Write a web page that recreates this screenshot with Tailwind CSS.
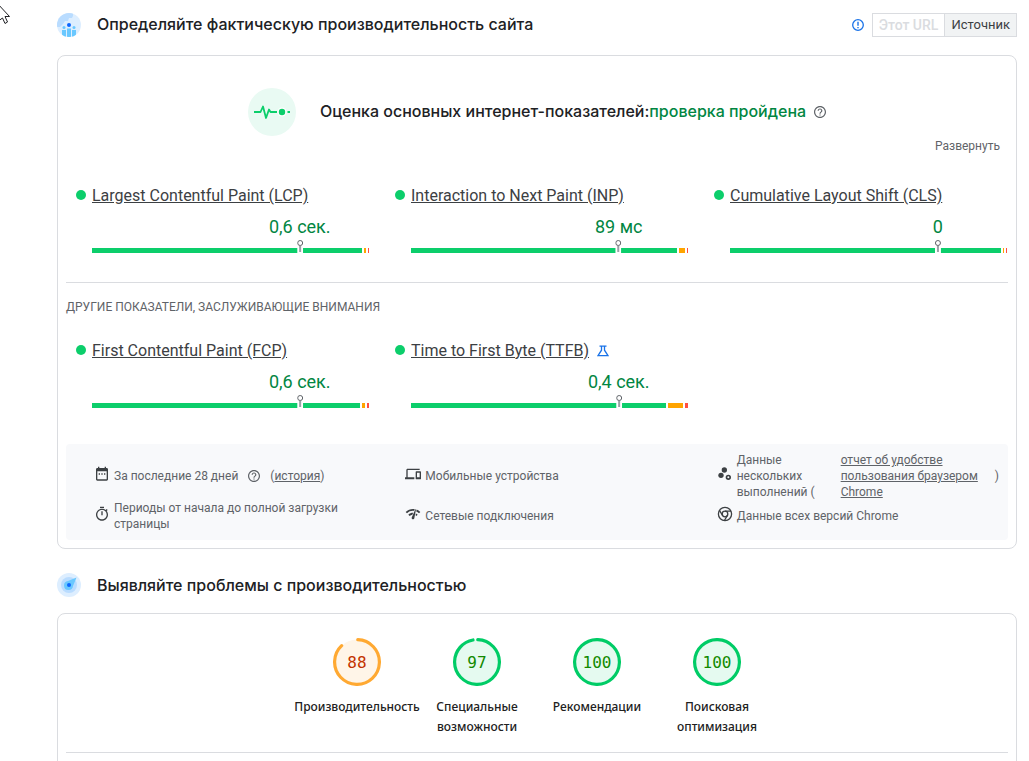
<!DOCTYPE html>
<html lang="ru">
<head>
    <meta charset="UTF-8">
    <meta name="viewport" content="width=device-width, initial-scale=1.0">
    <title>PageSpeed Insights</title>
    <script src="https://cdn.jsdelivr.net/npm/@tailwindcss/browser@4"></script>
</head>
<body class="bg-white font-['Roboto',sans-serif] text-[#3c4043] overflow-hidden">
    <svg class="absolute left-0 top-1.5" width="11" height="19" viewBox="0 0 11 19" fill="#fff" stroke="#1f2024" stroke-width="1"><path d="M-3-3 9.500 10.500H5L7.500 16 5 17.500 2.500 12-3 16z"/></svg>

    <main class="pl-[57px] pr-3">
        <!-- Field data -->
        <header class="flex items-center pt-3 h-[37px]">
            <svg class="mr-4" width="24" height="24" viewBox="0 0 24 24">
                <defs><clipPath id="disc"><circle cx="12" cy="12" r="12"/></clipPath></defs>
                <g clip-path="url(#disc)">
                    <path fill="#ddeeff" d="M0 0h24v24H0z"/>
                    <path fill="#b9dcff" d="M0 0h16v3l-1 2h-3l-1 3H8L6 11 3 14H0z"/>
                    <path fill="#69c8ff" d="M5 17h4v7H5zM15 17h4v7h-4zM10 15.500h4V24h-4z"/>
                    <circle cx="7" cy="14.500" r="1.500" fill="#69c8ff"/>
                    <circle cx="17" cy="14.500" r="1.500" fill="#69c8ff"/>
                    <circle cx="12" cy="12" r="2.800" fill="#ddeeff"/>
                    <circle cx="12" cy="12" r="2" fill="#0b66ff"/>
                </g>
            </svg>
            <h2 class="pb-0.5 font-['Inter',sans-serif] text-base font-medium text-[#202124]">Определяйте фактическую производительность сайта</h2>
            <svg class="ml-auto mr-2" width="12" height="12" viewBox="0 0 12 12" fill="none" stroke="#1a73e8"><circle cx="6" cy="6" r="5.300" stroke-width="1.300"/><path stroke-width="1.400" d="M6 2.800v4M6 7.900v1.300"/></svg>
            <div class="flex text-sm leading-[22px]">
                <button type="button" disabled class="border border-r-0 border-[#dadce0] px-1.5 font-medium text-[#dadce0]">Этот URL</button>
                <button type="button" class="border border-[#dadce0] bg-[#f1f3f4] px-1.5 text-[13px] text-[#3c4043]">Источник</button>
            </div>
        </header>

        <section class="mt-[18px] rounded-lg border border-[#dadce0] px-2 pb-2">
            <div class="flex items-center justify-center pt-8">
                <svg class="mr-6" width="48" height="48" viewBox="0 0 48 48">
                    <circle cx="24" cy="24" r="24" fill="#e9faf3"/>
                    <path fill="none" stroke="#0cce6b" stroke-width="1.800" stroke-linejoin="round" d="M6 24h6.500l2.500-5.500 3 11.500 3-8.500 1.500 2.500H29M39.500 24H42"/>
                    <circle cx="34" cy="24" r="4.500" fill="#fff"/>
                    <circle cx="34" cy="24" r="3.200" fill="#0cce6b"/>
                </svg>
                <h3 class="pb-0.5 font-['Inter',sans-serif] text-base font-medium text-[#202124]">Оценка основных интернет-показателей:<span class="text-[#018642]">проверка пройдена</span></h3>
                <svg class="ml-2" width="12" height="12" viewBox="2 2 20 20" fill="#5f6368"><path d="M11 18h2v-2h-2v2zm1-16C6.480 2 2 6.480 2 12s4.480 10 10 10 10-4.480 10-10S17.520 2 12 2zm0 18c-4.410 0-8-3.590-8-8s3.590-8 8-8 8 3.590 8 8-3.590 8-8 8zm0-14c-2.210 0-4 1.790-4 4h2c0-1.100.9-2 2-2s2 .9 2 2c0 2-3 1.750-3 5h2c0-2.250 3-2.500 3-5 0-2.210-1.790-4-4-4z"/></svg>
            </div>
            <div class="flex justify-end pr-2">
                <button type="button" class="text-xs leading-5 text-[#5f6368]">Развернуть</button>
            </div>

            <div id="vitals" class="grid grid-cols-3 gap-x-[26px] pt-7 pr-px pl-2.5"></div>

            <div class="mt-[29px] border-t border-[#dadce0] pt-3.5">
                <h4 class="text-xs leading-5 text-[#5f6368]">ДРУГИЕ ПОКАЗАТЕЛИ, ЗАСЛУЖИВАЮЩИЕ ВНИМАНИЯ</h4>
            </div>

            <div id="otherMetrics" class="grid grid-cols-3 gap-x-[26px] pt-[22px] pr-px pl-2.5"></div>

            <ul class="mt-9 grid grid-cols-3 gap-x-5 rounded bg-[#f8f9fb] py-2 pl-7 text-xs leading-4 text-[#5f6368]">
                <li class="flex items-center gap-1">
                    <svg class="mb-1 shrink-0" width="16" height="16" viewBox="0 0 24 24" fill="#3c4043"><path d="M19 3h-1V1h-2v2H8V1H6v2H5c-1.110 0-1.990.9-1.990 2L3 20c0 1.100.89 2 2 2h14c1.100 0 2-.9 2-2V5c0-1.100-.9-2-2-2zm0 17H5V8h14v12zM7 11h2v2H7zM11 11h2v2h-2zM15 11h2v2h-2z"/></svg>
                    <span>За последние 28 дней</span>
                    <svg class="mx-1.5 shrink-0" width="12" height="12" viewBox="2 2 20 20" fill="#5f6368"><path d="M11 18h2v-2h-2v2zm1-16C6.480 2 2 6.480 2 12s4.480 10 10 10 10-4.480 10-10S17.520 2 12 2zm0 18c-4.410 0-8-3.590-8-8s3.590-8 8-8 8 3.590 8 8-3.590 8-8 8zm0-14c-2.210 0-4 1.790-4 4h2c0-1.100.9-2 2-2s2 .9 2 2c0 2-3 1.750-3 5h2c0-2.250 3-2.500 3-5 0-2.210-1.790-4-4-4z"/></svg>
                    <span>(<a href="#" class="underline">история</a>)</span>
                </li>
                <li class="flex items-center gap-1">
                    <svg class="mb-1 shrink-0" width="16" height="16" viewBox="0 0 24 24" fill="#3c4043"><path d="M4 6h18V4H4c-1.100 0-2 .9-2 2v11H0v3h14v-3H4V6zm19 2h-6c-.55 0-1 .45-1 1v10c0 .55.45 1 1 1h6c.55 0 1-.45 1-1V9c0-.55-.45-1-1-1zm-1 9h-4v-7h4v7z"/></svg>
                    <span>Мобильные устройства</span>
                </li>
                <li class="flex items-center gap-1">
                    <svg class="mb-1 shrink-0" width="16" height="16" viewBox="0 0 24 24" fill="#3c4043"><circle cx="6" cy="14" r="4"/><circle cx="11" cy="6" r="4"/><path fill-rule="evenodd" d="M17 13a4 4 0 1 0 0 8 4 4 0 0 0 0-8zm0 2.500a1.500 1.500 0 1 1 0 3 1.500 1.500 0 0 1 0-3z"/></svg>
                    <span class="w-[92px] shrink-0">Данные нескольких выполнений (</span>
                    <a href="#" class="ml-2 w-[150px] underline">отчет об удобстве пользования браузером Chrome</a>
                    <span>)</span>
                </li>
                <li class="flex items-center gap-1">
                    <svg class="mb-1 shrink-0" width="16" height="16" viewBox="0 0 24 24" fill="#3c4043"><path d="M15 1H9v2h6V1zm-4 13h2V8h-2v6zm8.030-6.610 1.420-1.420c-.43-.51-.9-.99-1.410-1.410l-1.420 1.420C16.070 4.740 14.120 4 12 4c-4.970 0-9 4.030-9 9s4.020 9 9 9 9-4.030 9-9c0-2.120-.74-4.070-1.970-5.610zM12 20c-3.870 0-7-3.130-7-7s3.130-7 7-7 7 3.130 7 7-3.130 7-7 7z"/></svg>
                    <span>Периоды от начала до полной загрузки страницы</span>
                </li>
                <li class="flex items-center gap-1">
                    <svg class="mb-1 shrink-0" width="16" height="16" viewBox="0 0 24 24" fill="#3c4043"><path d="M15.900 5c-.17 0-.32.090-.41.230l-.07.150-5.180 11.650c-.16.290-.26.610-.26.960 0 1.110.9 2.010 2.010 2.010.96 0 1.770-.68 1.960-1.590l.01-.03L16.400 5.500c0-.28-.22-.5-.5-.5zM1 9l2 2c2.880-2.880 6.790-4.080 10.530-3.620l1.190-2.680C9.890 3.840 4.740 5.270 1 9zm20 2 2-2c-1.640-1.640-3.550-2.820-5.590-3.570l-.53 2.820c1.500.62 2.900 1.530 4.120 2.750zm-4 4 2-2c-.8-.8-1.700-1.420-2.660-1.890l-.55 2.920c.42.270.83.590 1.210.97zM5 13l2 2c1.130-1.130 2.560-1.790 4.030-2l1.280-2.880c-2.630-.08-5.300.87-7.310 2.880z"/></svg>
                    <span>Сетевые подключения</span>
                </li>
                <li class="flex items-center gap-1">
                    <svg class="mb-1 shrink-0" width="16" height="16" viewBox="0 0 16 16" fill="none" stroke="#3c4043" stroke-width="1.300"><circle cx="8" cy="8" r="6.600"/><circle cx="8" cy="8" r="2.800"/><path d="M8 5.200h6M5.600 9.400l-3.200-5M10.400 9.400l-3 5.100"/></svg>
                    <span>Данные всех версий Chrome</span>
                </li>
            </ul>
        </section>

        <!-- Lab data -->
        <header class="mt-6 flex items-center">
            <svg class="mr-4" width="24" height="24" viewBox="0 0 24 24">
                <circle cx="12" cy="12" r="12" fill="#ddeeff"/>
                <circle cx="12" cy="12" r="8" fill="#b9dcff"/>
                <path fill="#69c8ff" d="M19.500 4.500 16 13a4.500 4.500 0 1 1-5-5z"/>
                <circle cx="12" cy="12" r="2" fill="#0b66ff"/>
            </svg>
            <h2 class="font-['Inter',sans-serif] text-base leading-[22px] font-medium text-[#202124]">Выявляйте проблемы с производительностью</h2>
        </header>

        <section class="mt-4 rounded-lg border border-[#dadce0] px-2 pb-10">
            <div id="gauges" class="flex justify-center pt-6"></div>
            <hr class="mt-[15px] border-[#dadce0]">
        </section>
    </main>

    <script>
        const vitals = [
            { name: 'Largest Contentful Paint (LCP)', value: '0,6 сек.', split: [270, 2, 1] },
            { name: 'Interaction to Next Paint (INP)', value: '89 мс', split: [266, 6, 1] },
            { name: 'Cumulative Layout Shift (CLS)', value: '0', split: [271, 1, 1] },
        ];
        const otherMetrics = [
            { name: 'First Contentful Paint (FCP)', value: '0,6 сек.', split: [268, 3, 2] },
            { name: 'Time to First Byte (TTFB)', value: '0,4 сек.', split: [255, 15, 3], experimental: true },
        ];
        const gauges = [
            { label: 'Производительность', score: 88, ring: '#ffa932', fill: '#fff5e8', text: 'text-[#c33300]' },
            { label: 'Специальные возможности', score: 97, ring: '#00cc66', fill: '#e5faf0', text: 'text-[#128a00]' },
            { label: 'Рекомендации', score: 100, ring: '#00cc66', fill: '#e5faf0', text: 'text-[#128a00]' },
            { label: 'Поисковая оптимизация', score: 100, ring: '#00cc66', fill: '#e5faf0', text: 'text-[#128a00]' },
        ];

        const flask = `<svg class="ml-2" width="12" height="12" viewBox="0 0 12 12" fill="none" stroke="#1a73e8" stroke-width="1.300"><path d="M2.500 1.200h7M4.500 1.200v4L1 10.700h10L7.500 5.200v-4"/></svg>`;

        function metric(m) {
            return `
                <div>
                    <div class="flex items-center">
                        <span class="mr-1.5 mb-0.5 size-2.5 rounded-full bg-[#0cce6b]"></span>
                        <a href="#" class="text-base leading-6 underline">${m.name}</a>
                        ${m.experimental ? flask : ''}
                    </div>
                    <div class="relative ml-4 pt-10">
                        <div class="flex h-[5px] gap-0.5">
                            <span class="bg-[#0cce6b]" style="flex: ${m.split[0]} 0 0"></span>
                            <span class="bg-[#ffa400]" style="flex: ${m.split[1]} 0 0"></span>
                            <span class="bg-[#ff4e42]" style="flex: ${m.split[2]} 0 0"></span>
                        </div>
                        <div class="absolute bottom-0 left-3/4 flex -translate-x-1/2 flex-col items-center">
                            <span class="text-lg leading-6 whitespace-nowrap text-[#018642]">${m.value}</span>
                            <svg class="mt-px" width="6" height="13" viewBox="0 0 6 13"><path fill="#fff" d="M0 8h6v5H0z"/><path stroke="#9aa0a6" stroke-width="2" d="M3 6v6"/><circle cx="3" cy="3" r="2.500" fill="#fff" stroke="#5f6368"/></svg>
                        </div>
                    </div>
                </div>`;
        }

        function gauge(g) {
            const length = 2 * Math.PI * 56;
            const arc = g.score === 100 ? length : length * g.score / 100 - 4;
            return `
                <a href="#" class="flex w-[120px] flex-col items-center">
                    <span class="relative size-12">
                        <svg width="48" height="48" viewBox="0 0 120 120">
                            <circle cx="60" cy="60" r="56" fill="${g.fill}"/>
                            <circle cx="60" cy="60" r="56" fill="none" stroke="${g.ring}" stroke-width="8" stroke-linecap="round" stroke-dasharray="${arc} ${length}" transform="rotate(-88 60 60)"/>
                        </svg>
                        <span class="absolute inset-0 flex items-center justify-center pt-0.5 font-['DejaVu_Sans_Mono',monospace] text-base ${g.text}">${g.score}</span>
                    </span>
                    <span class="mt-[11px] text-center font-['Noto_Sans',sans-serif] text-xs leading-5 font-medium text-[#212121]">${g.label}</span>
                </a>`;
        }

        document.getElementById('vitals').innerHTML = vitals.map(metric).join('');
        document.getElementById('otherMetrics').innerHTML = otherMetrics.map(metric).join('');
        document.getElementById('gauges').innerHTML = gauges.map(gauge).join('');
    </script>
</body>
</html>
